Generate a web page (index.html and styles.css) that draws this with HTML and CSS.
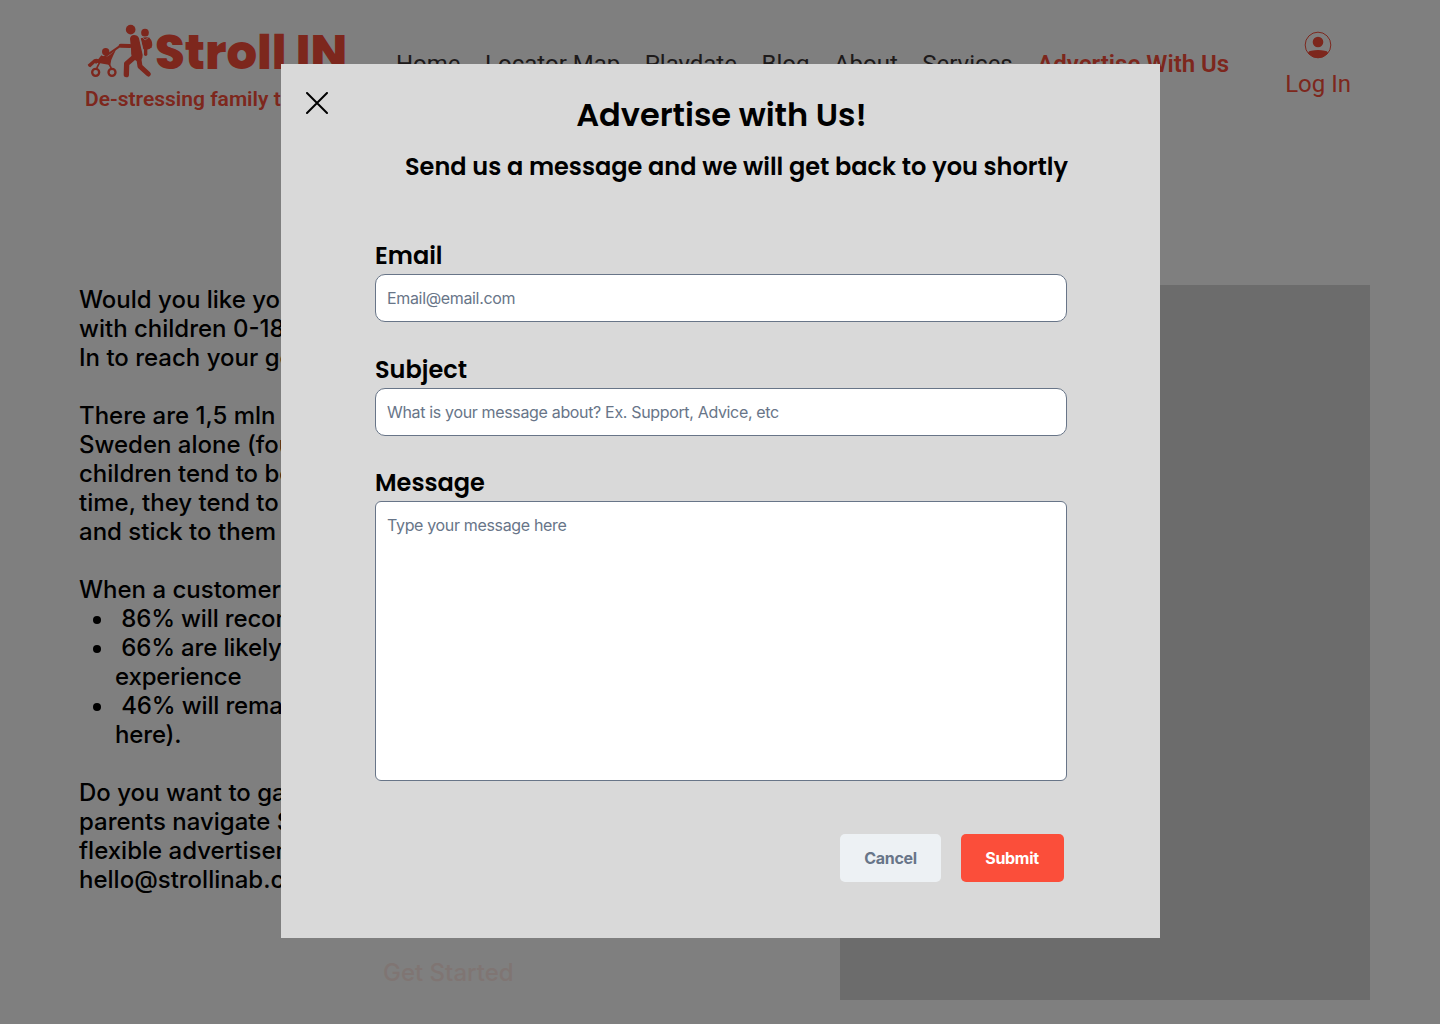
FILE: index.html
```html
<!DOCTYPE html>
<html lang="en">
<head>
    <meta charset="UTF-8">
    <meta name="viewport" content="width=device-width, initial-scale=1.0">
    <title>Stroll IN - Advertise With Us</title>
    <link rel="stylesheet" href="styles.css">
</head>
<body>
    <header class="header">
        <div class="logo">
            <div class="logo-row">
                <svg class="logo-icon" viewBox="0 0 222 180" fill="currentColor" stroke="currentColor" stroke-linecap="round" stroke-linejoin="round">
                    <!-- stroller -->
                    <g stroke="none">
                        <circle cx="77" cy="101" r="11"/>
                        <path d="M23 140 L42 124 Q48 121 57 124 L31 148 Q25 147 23 140 Z"/>
                        <path d="M50 130 L64 112 Q77 121 90 110 L108 95 L100 112 Q92 126 91 141 Q74 138 52 134 Z"/>
                    </g>
                    <g fill="none">
                        <circle cx="47" cy="163" r="10.5" stroke-width="7"/>
                        <circle cx="96" cy="163" r="10.5" stroke-width="7"/>
                        <path d="M48 134 L122 83" stroke-width="6"/>
                        <path d="M60 131 L51 149 M86 136 L93 149" stroke-width="5"/>
                        <path d="M122 83 L150 84" stroke-width="12"/>
                        <path d="M139 170 L140 137 L164 116" stroke-width="16"/>
                        <path d="M176 118 L180 145 L205 168" stroke-width="15"/>
                    </g>
                    <!-- parent -->
                    <g stroke="none">
                        <circle cx="152" cy="35" r="14.5"/>
                        <path d="M150 62 Q151 52 162 51 Q173 51 177 61 L188 111 Q188 129 172 130 L157 122 Q152 108 153 92 Z"/>
                    </g>
                    <!-- child on the back -->
                    <g stroke="none">
                        <circle cx="195" cy="44" r="11.5"/>
                        <path d="M182 61 Q194 56 207 58 Q221 72 215 88 Q208 98 190 94 Z"/>
                    </g>
                    <path d="M197 87 L197 109" stroke-width="10"/>
                    <path d="M180 57 L188 96" class="strap" fill="none" stroke-width="2"/>
                    <path d="M187 58 L195 66 L205 59" class="strap" fill="none" stroke-width="2"/>
                </svg>
                <span class="logo-text">Stroll IN</span>
            </div>
            <p class="tagline">De-stressing family time</p>
        </div>
        <nav class="nav">
            <a>Home</a>
            <a>Locator Map</a>
            <a>Playdate</a>
            <a>Blog</a>
            <a>About</a>
            <a>Services</a>
            <a class="active">Advertise With Us</a>
        </nav>
        <a class="login">
            <svg class="login-icon" viewBox="72 21 84 84">
                <circle cx="114" cy="63" r="38.5" fill="none" stroke="currentColor" stroke-width="3"/>
                <circle cx="114" cy="54" r="16" fill="currentColor"/>
                <path d="M84 86 Q86 80 94 80 Q114 76 134 80 Q142 80 144 86 Q132 102 114 102 Q96 102 84 86 Z" fill="currentColor"/>
            </svg>
            <span>Log In</span>
        </a>
    </header>

    <main class="content">
        <div class="copy">
            <p>Would you like your business to be seen by families<br>
                with children 0-18 years old? Advertise with Stroll<br>
                In to reach your goals.</p>
            <p>There are 1,5 mln families with children in<br>
                Sweden alone (found here). Families with<br>
                children tend to be loyal customers. Over<br>
                time, they tend to find favourite places<br>
                and stick to them for years.</p>
            <div class="stats">
                When a customer has a good experience:
                <ul>
                    <li><span>&nbsp;86% will recommend it to friends</span></li>
                    <li><span>&nbsp;66% are likely to share their<br>experience</span></li>
                    <li><span>&nbsp;46% will remain loyal (found<br>here).</span></li>
                </ul>
            </div>
            <p>Do you want to gain new customers and help<br>
                parents navigate Sweden? We offer<br>
                flexible advertisement. Contact us at<br>
                hello@strollinab.com</p>
            <a class="get-started">Get Started</a>
        </div>
        <div class="picture"></div>
    </main>

    <div class="overlay">
        <div class="modal">
            <div class="modal-header">
                <svg class="close" viewBox="0 0 22 22" fill="none" stroke="#000" stroke-width="2" stroke-linecap="round">
                    <path d="M1 1 L21 21 M21 1 L1 21"/>
                </svg>
                <h1>Advertise with Us!</h1>
            </div>
            <h2>Send us a message and we will get back to you shortly</h2>
            <form class="form">
                <label for="email">Email</label>
                <input type="text" id="email" placeholder="Email@email.com">

                <label for="subject">Subject</label>
                <input type="text" id="subject" placeholder="What is your message about? Ex. Support, Advice, etc">

                <label for="message">Message</label>
                <textarea id="message" placeholder="Type your message here"></textarea>

                <div class="buttons">
                    <button type="button" class="cancel">Cancel</button>
                    <button type="button" class="submit">Submit</button>
                </div>
            </form>
        </div>
    </div>
</body>
</html>
```
FILE: styles.css
```css
* {
    box-sizing: border-box;
}

body {
    margin: 0;
    height: 1024px;
    overflow: hidden;
    background-color: #ffffff;
    color: #000000;
    font-family: Inter, sans-serif;
}

/* Header */
.header {
    display: flex;
    align-items: flex-start;
    height: 285px;
    padding: 18px 89px 0 80px;
    font-family: Roboto, sans-serif;
    white-space: nowrap;
}

.logo {
    width: 316px;
    color: #fb4e3a;
}

.logo-row {
    display: flex;
    height: 60px;
}

.logo-icon {
    width: 74px;
    height: 60px;
}

.strap {
    stroke: #ffffff;
}

.logo-text {
    padding: 2px 0 0 1px;
    font-family: Poppins, Inter, sans-serif;
    font-size: 48px;
    font-weight: 800;
    line-height: 66px;
}

.tagline {
    margin: 9px 0 0 5px;
    font-size: 21px;
    font-weight: 600;
    line-height: 24px;
}

.nav {
    display: flex;
    gap: 24.5px;
    margin-top: 32px;
    font-size: 24px;
    line-height: 28px;
    color: #3c3637;
}

.nav .active {
    font-weight: 600;
    color: #fb4e3a;
}

.login {
    display: flex;
    flex-direction: column;
    align-items: center;
    gap: 11px;
    margin: 13px 0 0 auto;
    font-size: 24px;
    line-height: 28px;
    color: #fb4e3a;
}

.login-icon {
    width: 28px;
    height: 28px;
}

/* Page content */
.content {
    display: flex;
    justify-content: space-between;
    padding: 0 70px 0 79px;
}

.copy {
    font-size: 24px;
    font-weight: 500;
    line-height: 29px;
    white-space: nowrap;
}

.copy p,
.stats {
    margin: 0 0 29px;
}

.stats ul {
    margin: 0;
    padding: 0;
    list-style: none;
}

.stats li {
    display: grid;
    grid-template-columns: 36px 1fr;
    letter-spacing: -0.15px;
}

.stats li::before {
    content: "";
    width: 8px;
    height: 8px;
    margin: 12px 0 0 14px;
    border-radius: 50%;
    background-color: #000000;
}

.get-started {
    display: block;
    margin: 64px 0 0 304px;
    color: #ffebe6;
}

.picture {
    width: 530px;
    height: 715px;
    background-color: #d9d9d9;
}

/* Modal */
.overlay {
    position: fixed;
    inset: 0;
    display: flex;
    align-items: flex-start;
    padding: 64px 0 0 281px;
    background-color: rgba(0, 0, 0, 0.5);
}

.modal {
    width: 879px;
    height: 874px;
    padding-top: 27px;
    background-color: #d9d9d9;
}

.modal-header {
    display: flex;
    align-items: flex-start;
    padding: 0 47px 0 25px;
}

.close {
    width: 22px;
    height: 22px;
    margin-top: 1px;
}

.modal h1,
.modal h2,
.form label {
    margin: 0;
    font-family: Poppins, Inter, sans-serif;
    font-weight: 600;
}

.modal h1 {
    flex: 1;
    padding-left: 2px;
    text-align: center;
    font-size: 32px;
    line-height: 48px;
}

.modal h2 {
    margin: 10px 0 0 124px;
    font-size: 24px;
    line-height: 36px;
}

.form {
    display: flex;
    flex-direction: column;
    width: 692px;
    margin: 53px 0 0 94px;
}

.form label {
    font-size: 24px;
    line-height: 36px;
}

.form input,
.form textarea {
    height: 48px;
    margin: 0 0 30px;
    padding: 0 11px;
    border: 1px solid #687588;
    border-radius: 10px;
    background-color: #ffffff;
    font-family: Inter, sans-serif;
    font-size: 16px;
    line-height: 20px;
    letter-spacing: -0.34px;
    outline: none;
}

.form #subject {
    margin-bottom: 29px;
}

.form textarea {
    height: 280px;
    margin: 0;
    padding-top: 13px;
    border-radius: 6px;
    resize: none;
}

.form ::placeholder {
    color: #687588;
    opacity: 1;
}

.buttons {
    display: flex;
    justify-content: flex-end;
    gap: 20px;
    margin: 53px 3px 0 0;
}

.buttons button {
    height: 48px;
    padding: 0;
    border: none;
    border-radius: 5px;
    font-family: Inter, sans-serif;
    font-size: 16px;
    font-weight: 700;
    letter-spacing: -0.32px;
    cursor: pointer;
}

.cancel {
    width: 101px;
    background-color: #edf1f4;
    color: #687588;
}

.buttons .submit {
    width: 103px;
    padding-right: 1px;
    background-color: #fb4e3a;
    color: #ffffff;
}
```
